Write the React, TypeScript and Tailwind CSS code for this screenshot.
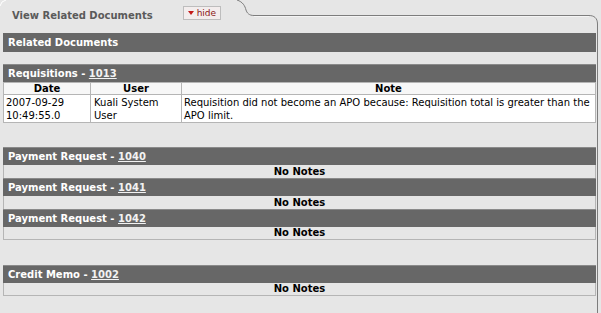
import React from 'react';

const PAYMENTS = ['1040', '1041', '1042'];

function Bar({ label, num }: { label: string; num?: string }) {
  return (
    <div className="h-[18px] bg-[#676767] border-t border-[#8a8a8a] flex items-center pl-[5px] text-white font-bold text-[10px]">
      {label}
      {num && (
        <>
          <span className="whitespace-pre"> - </span>
          <a className="underline text-[#f2f2f2]">{num}</a>
        </>
      )}
    </div>
  );
}

function NoNotes({ last }: { last?: boolean }) {
  return (
    <div
      className={`h-[13px] border-x border-[#b5b5b5] bg-[#e6e6e6] flex items-center justify-center text-[10px] font-bold text-black leading-none ${
        last ? 'border-b' : ''
      }`}
    >
      No Notes
    </div>
  );
}

export default function App() {
  return (
    <div className="w-[601px] h-[313px] bg-[#e6e6e6] relative overflow-hidden font-['DejaVu_Sans',sans-serif]">
      {/* tab outline */}
      <svg className="absolute inset-0 pointer-events-none" width="601" height="313">
        <path d="M0 6 Q1 1 6 0" fill="none" stroke="#ffffff" strokeWidth="1" />
        <path
          d="M237 0 C243 2 245 6 246 10 C247 13 249 15.5 254 15.5 L589 15.5 C594 15.5 597.5 18 597.5 24 L597.5 313"
          fill="none"
          stroke="#7d7d7d"
          strokeWidth="1"
        />
        <path d="M254 16.5 L589 16.5" stroke="#f4f4f4" strokeWidth="1" />
      </svg>

      <div className="h-[33px] flex items-start pt-[6px] pl-[12px] relative">
        <span className="text-[10px] font-bold text-[#5a5a5a] mt-[2px]">View Related Documents</span>
        <button className="ml-[30px] h-[14px] px-[4px] flex items-center gap-[3px] bg-[#f3eded] border border-[#bdbdbd] text-[9px] text-[#8b1515] leading-none">
          <svg width="6" height="4" viewBox="0 0 6 4">
            <path d="M0 0 L6 0 L3 4 Z" fill="#c41a1a" />
          </svg>
          hide
        </button>
      </div>

      <div className="pl-[3px] pr-[5px]">
        <div className="h-[19px] bg-[#676767] flex items-center pl-[5px] text-white font-bold text-[10px]">
          Related Documents
        </div>

        <div className="mt-[12px]">
          <Bar label="Requisitions" num="1013" />
          <table className="w-full border-collapse text-[10px] text-black">
            <thead>
              <tr className="h-[12px] bg-[#f7f7f7]">
                <th className="w-[87px] border border-[#b5b5b5] font-bold leading-[11px] p-0">Date</th>
                <th className="w-[91px] border border-[#b5b5b5] font-bold leading-[11px] p-0">User</th>
                <th className="border border-[#b5b5b5] font-bold leading-[11px] p-0">Note</th>
              </tr>
            </thead>
            <tbody>
              <tr className="bg-white align-top">
                <td className="border border-[#b5b5b5] px-[2px] pt-[1px] pb-0 leading-[13px]">
                  2007-09-29
                  <br />
                  10:49:55.0
                </td>
                <td className="border border-[#b5b5b5] px-[3px] pt-[1px] pb-0 leading-[13px]">
                  Kuali System
                  <br />
                  User
                </td>
                <td className="border border-[#b5b5b5] px-[2px] pt-[1px] pb-0 leading-[13px]">
                  Requisition did not become an APO because: Requisition total is greater than the APO limit.
                </td>
              </tr>
            </tbody>
          </table>
        </div>

        <div className="mt-[24px]">
          {PAYMENTS.map((n, i) => (
            <div key={n}>
              <Bar label="Payment Request" num={n} />
              <NoNotes last={i === PAYMENTS.length - 1} />
            </div>
          ))}
        </div>

        <div className="mt-[25px]">
          <Bar label="Credit Memo" num="1002" />
          <NoNotes last />
        </div>
      </div>
    </div>
  );
}
